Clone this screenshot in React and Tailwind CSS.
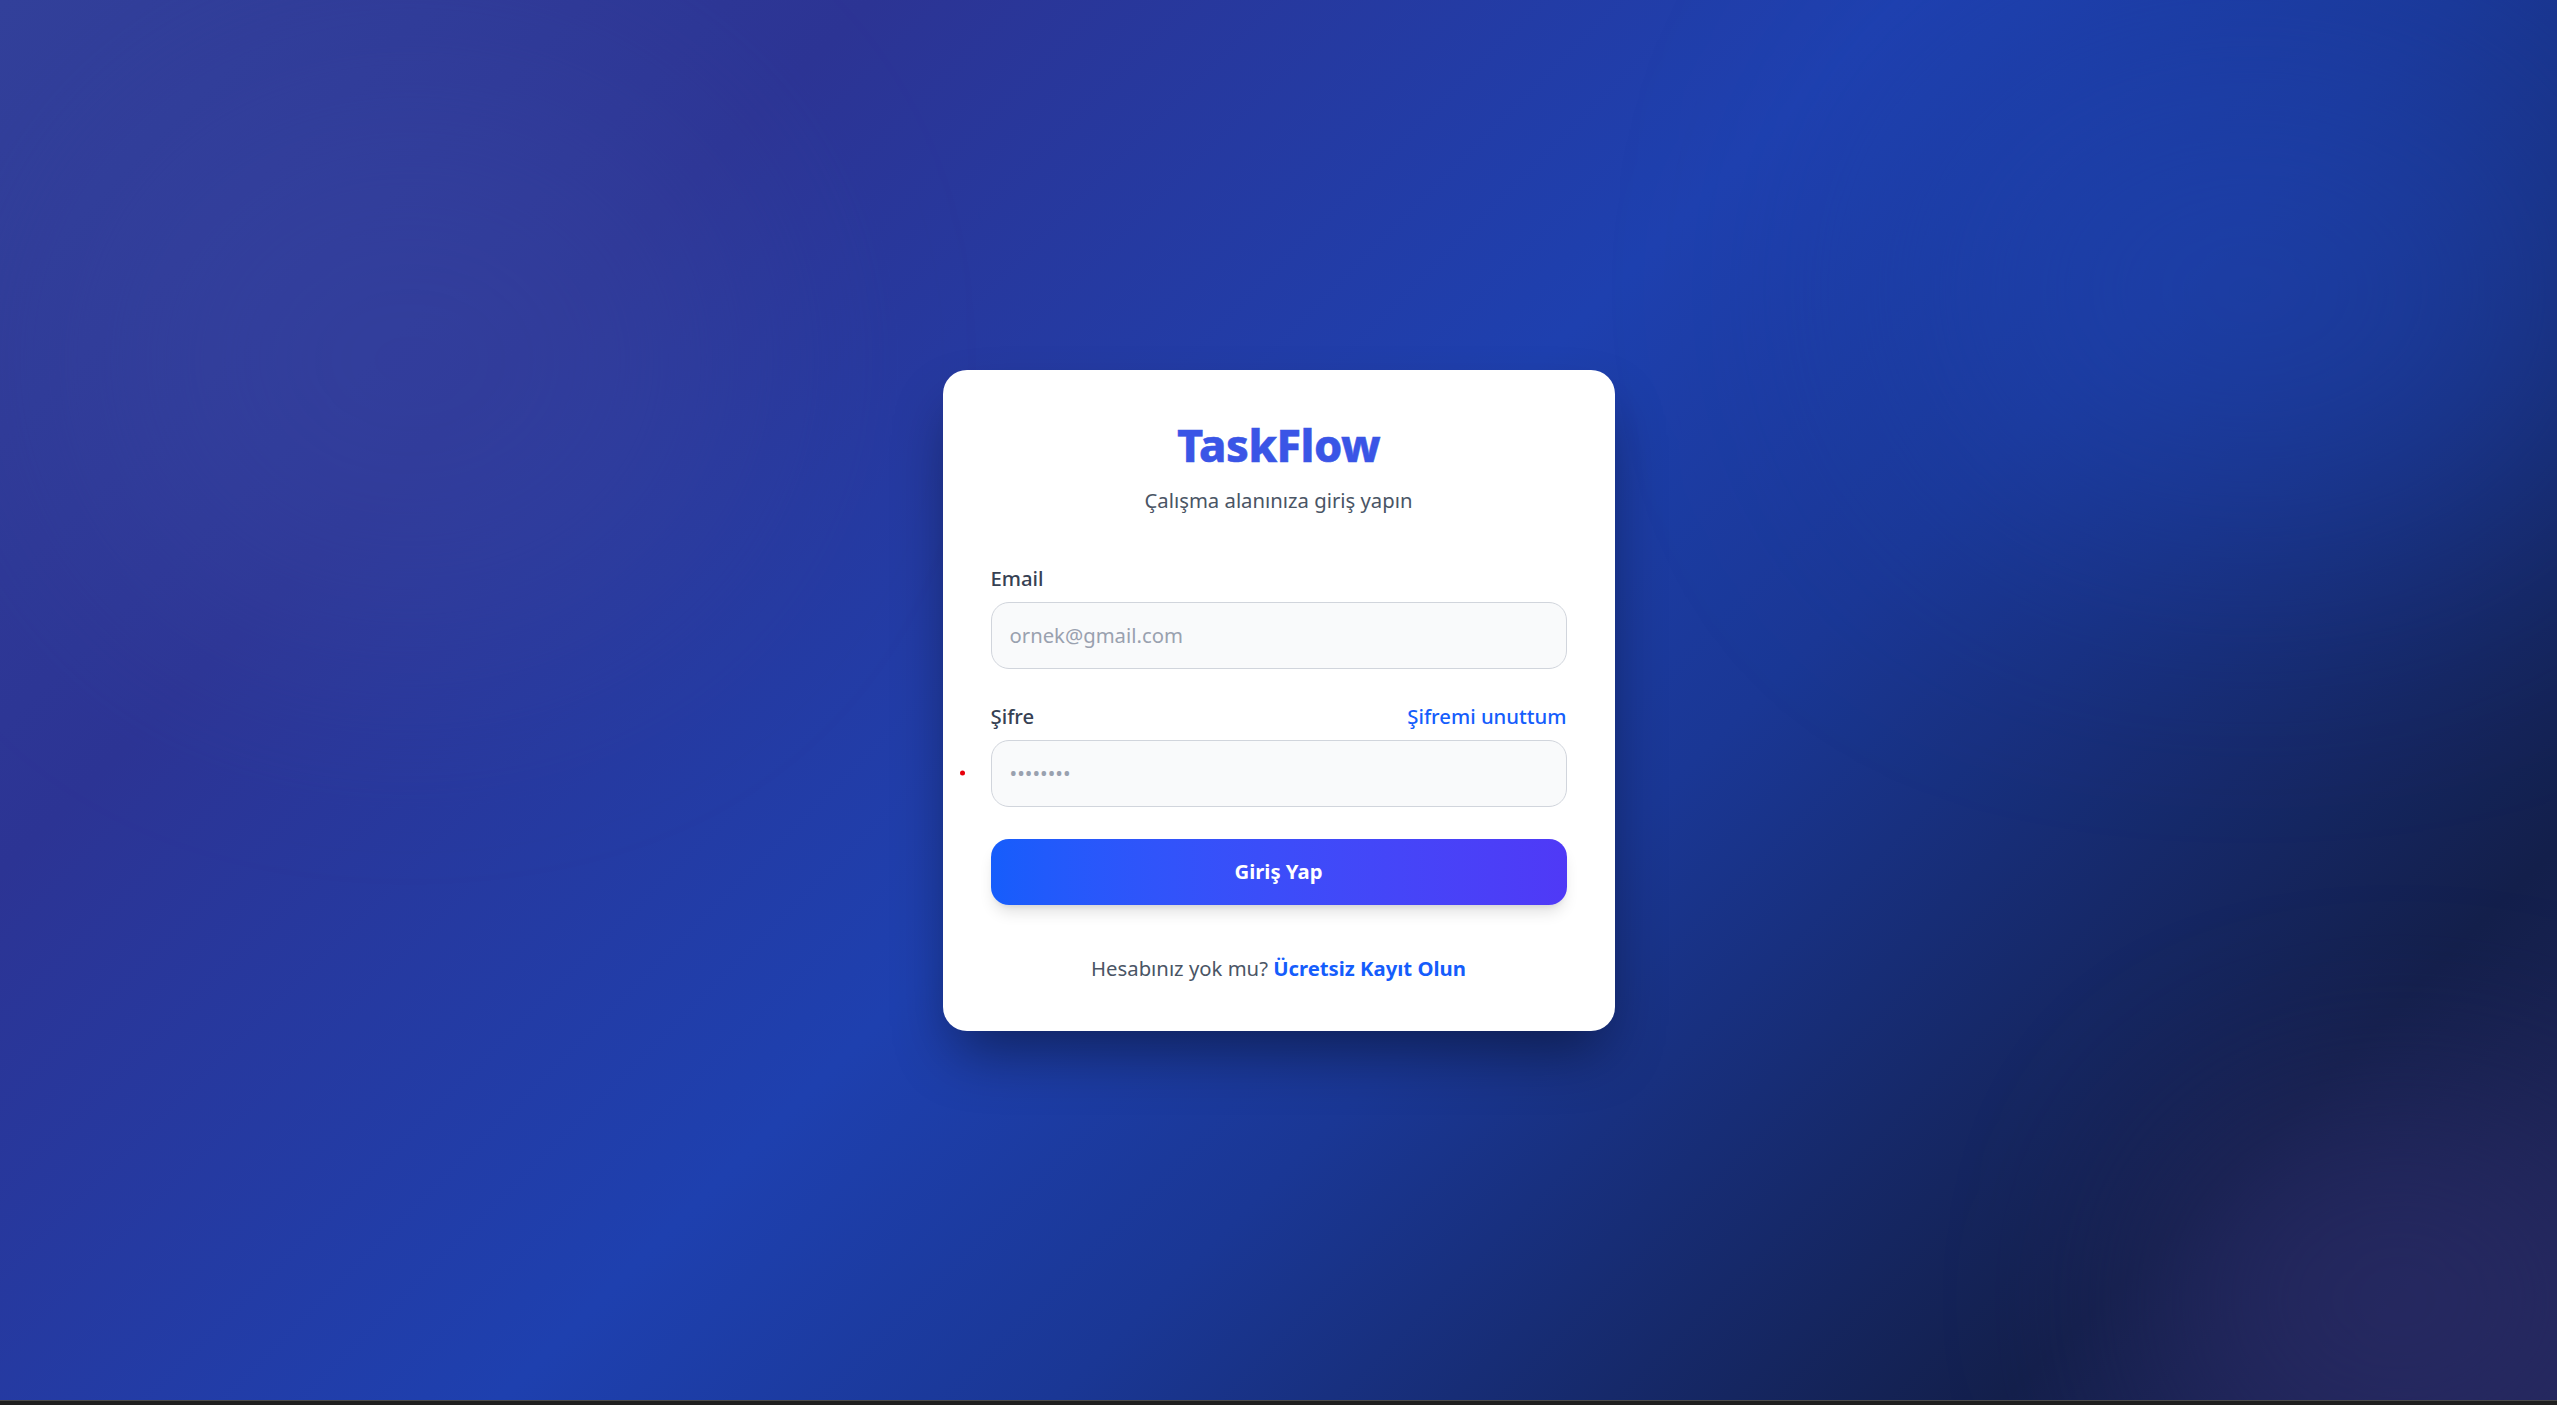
import React from "react";

export default function App() {
  return (
    <div
      className="min-h-[1405px] w-full flex flex-col text-gray-700"
      style={{ fontFamily: '"Segoe UI", "Noto Sans", sans-serif' }}
    >
      <div className="relative flex-1 min-h-[1400px] flex items-center justify-center overflow-hidden bg-[linear-gradient(135deg,#32409a_0%,#2c3494_22%,#1e40af_48%,#1a3795_62%,#131f4b_86%,#22265a_100%)]">
        {/* soft background glows */}
        <div className="absolute left-[60px] top-[60px] w-[700px] h-[600px] rounded-full bg-[#3a4aa6] opacity-40 blur-[120px]" />
        <div className="absolute left-[1900px] top-[40px] w-[700px] h-[500px] rounded-full bg-[#1f46b8] opacity-50 blur-[140px]" />
        <div className="absolute left-[2150px] top-[1100px] w-[500px] h-[400px] rounded-full bg-[#2a2b66] opacity-70 blur-[100px]" />

        <div className="relative w-[672px] bg-white rounded-[24px] p-[48px] shadow-[0_30px_60px_-12px_rgba(0,0,0,0.45)]">
          <div className="text-center mb-[48px]">
            <h1 className="text-[45px] leading-[54px] font-extrabold tracking-[-0.5px] text-[#3a55e6] [-webkit-text-stroke:0.5px_#3a55e6]">
              TaskFlow
            </h1>
            <p className="mt-[13px] text-[20.3px] leading-[30px] text-gray-600">
              Çalışma alanınıza giriş yapın
            </p>
          </div>

          <form className="flex flex-col gap-[32px]" onSubmit={(e) => e.preventDefault()}>
            <div>
              <label className="block mb-[9px] text-[20.3px] leading-[30px] font-medium text-gray-700">Email</label>
              <input
                type="email"
                placeholder="ornek@gmail.com"
                className="w-full h-[67px] px-[18px] rounded-[18px] border border-gray-300 bg-gray-50 text-[20.3px] text-gray-800 placeholder:text-gray-400 outline-none"
              />
            </div>

            <div>
              <div className="flex items-center justify-between mb-[9px]">
                <label className="text-[20.3px] leading-[30px] font-medium text-gray-700">Şifre</label>
                <a href="#" className="text-[20.3px] leading-[30px] font-medium text-blue-600">
                  Şifremi unuttum
                </a>
              </div>
              <div className="relative">
                <span className="absolute left-[-31px] top-1/2 -translate-y-1/2 w-[5px] h-[5px] rounded-full bg-red-600" />
                <input
                  type="password"
                  placeholder="••••••••"
                  className="w-full h-[67px] px-[18px] rounded-[18px] border border-gray-300 bg-gray-50 text-[20.3px] text-gray-800 placeholder:text-gray-400 outline-none"
                />
              </div>
            </div>

            <button
              type="submit"
              className="w-full h-[66px] rounded-[18px] bg-gradient-to-r from-blue-600 to-indigo-600 text-white text-[20.3px] font-bold shadow-[0_10px_15px_-3px_rgba(0,0,0,0.12),0_4px_6px_-4px_rgba(0,0,0,0.12)]"
            >
              Giriş Yap
            </button>
          </form>

          <p className="mt-[48px] text-center text-[20.3px] leading-[30px] text-gray-600">
            Hesabınız yok mu?{" "}
            <a href="#" className="font-bold text-blue-600">
              Ücretsiz Kayıt Olun
            </a>
          </p>
        </div>
      </div>
      <div className="h-[5px] border-t border-[#4a4a4a] bg-[#1f1f1f]" />
    </div>
  );
}
